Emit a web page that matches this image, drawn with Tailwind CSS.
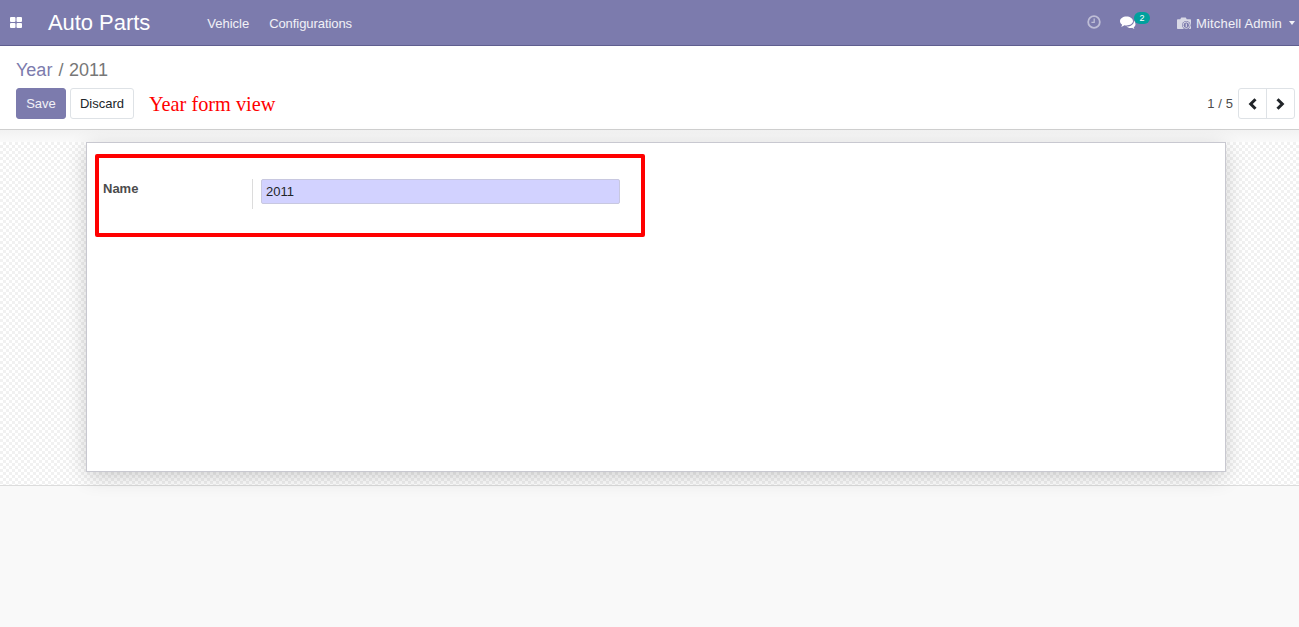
<!DOCTYPE html>
<html>

<head>
    <meta charset="UTF-8">
    <title>Auto Parts</title>
    <script src="https://cdn.jsdelivr.net/npm/@tailwindcss/browser@4"></script>
</head>

<body class="h-[627px] overflow-hidden bg-[#f9f9f9] font-['Liberation_Sans',Arial,sans-serif] text-[13px] text-[#4c4c4c]">
    <!-- top navbar -->
    <header class="h-[46px] flex items-center bg-[#7c7bad] border-b border-[#5f5e8f] text-white">
        <svg class="ml-[10px] w-[12px] h-[11px]" viewBox="0 0 12 11" fill="#fff">
            <rect x="0" y="0" width="5.5" height="5" rx="1"></rect>
            <rect x="6.5" y="0" width="5.5" height="5" rx="1"></rect>
            <rect x="0" y="6" width="5.5" height="5" rx="1"></rect>
            <rect x="6.5" y="6" width="5.5" height="5" rx="1"></rect>
        </svg>
        <span class="ml-[26px] mt-[1px] text-[22px] leading-none tracking-[-0.05px]">Auto Parts</span>
        <nav class="ml-[57px] mt-[2px] flex gap-[20px] text-white/90">
            <span>Vehicle</span>
            <span class="tracking-[-0.07px]">Configurations</span>
        </nav>
        <div class="ml-auto flex items-center">
            <svg class="w-[14px] h-[14px] mb-[2px]" viewBox="0 0 14 14" fill="none" stroke="#fff" stroke-opacity="0.5">
                <circle cx="7" cy="7" r="5.8" stroke-width="1.8"></circle>
                <path d="M7.2 3.5V7.4H4.4" stroke-width="1.3"></path>
            </svg>
            <div class="relative ml-[19px] mt-[1px] w-[16px] h-[14px]">
                <svg class="w-[16px] h-[14px]" viewBox="0 0 16 14" fill="#fff">
                    <path d="M6.500.6C2.900.6 0 2.700 0 5.300c0 1.400.9 2.600 2.200 3.500-.2.7-.6 1.400-1.100 1.900 1.200-.1 2.400-.6 3.300-1.400.7.1 1.400.2 2.100.2 3.600 0 6.500-2 6.500-4.200C13 2.700 10.100.6 6.500.6z"></path>
                    <path d="M13.800 4.500c.1.300.1.600.1.900 0 2.900-3.200 5-7 5.100-.2 0-.3 0-.5 0 1 .9 2.500 1.500 4.200 1.500.5 0 1-.1 1.500-.2.7.6 1.500 1 2.400 1.100-.4-.4-.7-.9-.8-1.500 1-.7 1.800-1.600 1.800-2.800 0-1.600-.7-3.100-1.700-4.100z"></path>
                </svg>
                <span class="absolute left-[14px] top-[-4px] w-[16px] h-[12px] rounded-full bg-[#00a09d] text-center text-[9px] leading-[12px] text-white">2</span>
            </div>
            <svg class="ml-[41px] mt-[1px] w-[14px] h-[13px]" viewBox="0 0 14 13">
                <path d="M0 3.200C0 2.600.4 2.200 1 2.200h2.200L4.300.4h4.400l1.100 1.800H13c.6 0 1 .4 1 1V11c0 .6-.4 1-1 1H1c-.6 0-1-.4-1-1z" fill="#d9d9e6"></path>
                <circle cx="9.300" cy="8.200" r="4.200" fill="#7c7bad"></circle>
                <circle cx="9.300" cy="8.200" r="3.200" fill="none" stroke="#d9d9e6" stroke-width="1"></circle>
                <path d="M9.300 6.400v3.600" stroke="#d9d9e6" stroke-width="1.200"></path>
            </svg>
            <span class="ml-[5px] mt-[2px] tracking-[0.15px] text-white/90">Mitchell Admin</span>
            <span class="ml-[7px] mr-[4px] w-0 h-0 border-x-[3.5px] border-x-transparent border-t-[4px] border-t-white/90"></span>
        </div>
    </header>

    <!-- control panel -->
    <section class="h-[84px] bg-white border-b border-[#cfcfcf] pl-[16px] pr-[4px] pt-[12px]">
        <div class="h-[24px] flex items-center gap-[6px] text-[18px] leading-none">
            <span class="text-[#7c7bad]">Year</span>
            <span class="text-[#777777]">/</span>
            <span class="text-[#777777] -ml-[0.5px] tracking-[0.1px]">2011</span>
        </div>
        <div class="mt-[6px] flex items-center">
            <button class="w-[50px] h-[31px] rounded-[3px] bg-[#7c7bad] border border-[#7c7bad] text-white/90">Save</button>
            <button class="ml-[4px] w-[64px] h-[31px] rounded-[3px] bg-white border border-[#dee2e6] text-[#212529]">Discard</button>
            <span class="ml-[15px] mt-[2px] font-['Liberation_Serif',serif] text-[20.3px] leading-none text-[#ff0000]">Year form view</span>
            <span class="ml-auto text-[#4c4c4c] tracking-[0.1px]">1 / 5</span>
            <div class="ml-[5px] flex h-[31px] w-[57px] rounded-[3px] bg-white border border-[#dee2e6]">
                <div class="flex-1 flex items-center justify-center border-r border-[#dee2e6]">
                    <svg class="w-[10px] h-[12px] ml-[1px]" viewBox="0 0 10 12" fill="none" stroke="#212529" stroke-width="3">
                        <path d="M7.500 1.200L2.700 6l4.800 4.800"></path>
                    </svg>
                </div>
                <div class="flex-1 flex items-center justify-center">
                    <svg class="w-[10px] h-[12px] -ml-[1px]" viewBox="0 0 10 12" fill="none" stroke="#212529" stroke-width="3">
                        <path d="M2.500 1.200L7.300 6l-4.800 4.800"></path>
                    </svg>
                </div>
            </div>
        </div>
    </section>

    <!-- form view -->
    <main class="relative h-[356px] border-b border-[#dcdcdc] pt-[12px] bg-[repeating-conic-gradient(#f1f1f1_0_25%,#ffffff_0_50%)] bg-size-[6px_6px]">
        <div class="absolute inset-x-0 top-0 h-[12px] bg-gradient-to-b from-[#f2f2f2] to-[#fafafa]"></div>
        <div class="relative ml-[86px] w-[1140px] h-[330px] bg-white border border-[#c8c8d0] shadow-[0_5px_20px_-1px_rgba(0,0,0,0.2)] pl-[16px] pt-[36px]">
            <div class="flex items-start">
                <label class="w-[149px] font-bold leading-[18px] mt-[1px] text-[#4c4c4c]">Name</label>
                <div class="w-px h-[30px] bg-[#dcdcdc]"></div>
                <input value="2011" class="ml-[8px] w-[359px] h-[25px] px-[4px] rounded-[2px] bg-[#d2d2ff] border border-[#c8c8e0] text-[13px] text-[#212529] outline-none">
            </div>
        </div>
        <!-- annotation -->
        <div class="absolute left-[95px] top-[24px] w-[550px] h-[83px] border-[4px] border-[#ff0000] rounded-[2px] pointer-events-none"></div>
    </main>
</body>

</html>
